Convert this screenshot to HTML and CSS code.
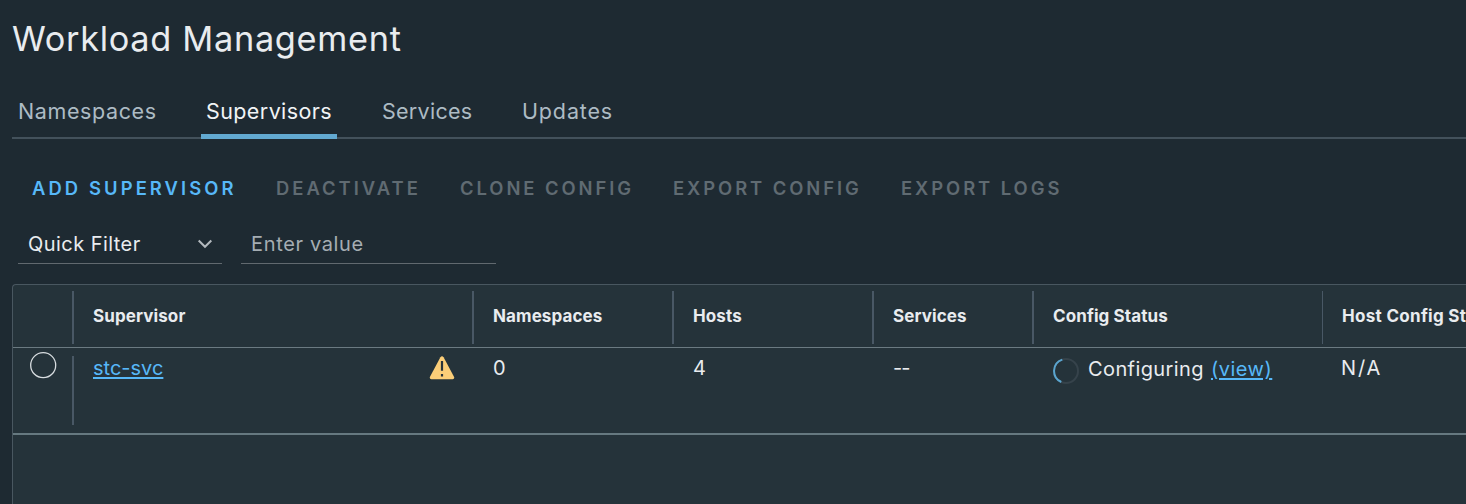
FILE: index.html
```html
<!DOCTYPE html>
<html lang="en">
<head>
<meta charset="utf-8">
<title>Workload Management</title>
<link rel="stylesheet" href="styles.css">
</head>
<body>
<main class="page">
  <h1 class="title">Workload Management</h1>
  <nav class="tabs">
    <a class="tab tab-namespaces">Namespaces</a>
    <a class="tab tab-supervisors active">Supervisors</a>
    <a class="tab tab-services">Services</a>
    <a class="tab tab-updates">Updates</a>
  </nav>
  <div class="actions">
    <button class="action add">ADD SUPERVISOR</button>
    <button class="action deactivate" disabled>DEACTIVATE</button>
    <button class="action clone" disabled>CLONE CONFIG</button>
    <button class="action export" disabled>EXPORT CONFIG</button>
    <button class="action logs" disabled>EXPORT LOGS</button>
  </div>
  <div class="filters">
    <div class="select"><span>Quick Filter</span>
      <svg class="chevron" width="16" height="10" viewBox="0 0 16 10"><path d="M1.7 1.5 8 7.8l6.3-6.3"/></svg>
    </div>
    <div class="field">Enter value</div>
  </div>
  <section class="grid">
    <div class="row head">
      <div class="cell pick"></div>
      <div class="cell">Supervisor</div>
      <div class="cell">Namespaces</div>
      <div class="cell">Hosts</div>
      <div class="cell">Services</div>
      <div class="cell">Config Status</div>
      <div class="cell last">Host Config St</div>
    </div>
    <div class="row body">
      <div class="cell pick"><svg width="28" height="28" viewBox="0 0 28 28"><circle class="radio" cx="14.2" cy="14.2" r="12.5"/></svg></div>
      <div class="cell name"><a class="link">stc-svc</a>
        <svg class="warn" width="26" height="24" viewBox="0 0 26 24"><path class="tri" d="M11.4 1.2Q13 -.6 14.6 1.2L25 20.8Q25.8 23 23.7 23.2H2.3Q.2 23 1 20.8Z"/><path class="mark" d="M13 5v9.8M13 18v2.4"/></svg>
      </div>
      <div class="cell">0</div>
      <div class="cell">4</div>
      <div class="cell dashes">--</div>
      <div class="cell status">
        <svg class="spinner" width="26" height="26" viewBox="0 0 26 26"><circle class="track" cx="13" cy="13" r="12"/><path class="arc" d="M9.3 1.6A12 12 0 0 0 8.3 24"/></svg>
        <span class="state">Configuring</span><a class="link view">(view)</a>
      </div>
      <div class="cell last">N/A</div>
    </div>
  </section>
</main>
</body>
</html>
```
FILE: styles.css
```css
* { box-sizing: border-box; }
body {
  margin: 0;
  height: 504px;
  overflow: hidden;
  background: #1e2a32;
  color: #e9ecef;
  font-family: Inter, "Liberation Sans", sans-serif;
  font-size: 20px;
}
.page { width: 1466px; height: 504px; padding-left: 12px; overflow: hidden; white-space: nowrap; }
.title { margin: 0; padding: 17px 0 0; height: 85px; font-size: 34.3px; font-weight: 400; line-height: 43px; letter-spacing: .7px; }
.tabs { display: flex; height: 54px; border-bottom: 2px solid #43515b; font-size: 21.5px; }
.tab { height: 54px; padding-left: 5px; line-height: 52px; color: #adbbc4; }
.tab-namespaces { width: 189px; padding-left: 6px; letter-spacing: .6px; }
.tab-supervisors { width: 136px; margin-right: 40px; letter-spacing: .4px; }
.tab-services { width: 140px; letter-spacing: .27px; }
.tab-updates { letter-spacing: .85px; }
.tab.active { color: #f1f4f6; border-bottom: 5px solid #62a9d1; }
.actions { display: flex; height: 85px; padding: 32px 0 0 20px; }
.action { display: block; height: 35px; padding: 0; border: 0; background: none; font: 600 18.4px/35px Inter, sans-serif; letter-spacing: 2.95px; color: #606b72; text-align: left; }
.add { width: 244px; color: #57b8f8; letter-spacing: 3.1px; }
.deactivate { width: 184px; letter-spacing: 3px; }
.clone { width: 213px; }
.export { width: 228px; }
.filters { display: flex; gap: 19px; height: 60px; padding-left: 6px; }
.select, .field { height: 40px; padding: 0 10px; border-bottom: 1px solid #61696f; line-height: 40px; }
.select { display: flex; width: 204px; align-items: center; justify-content: space-between; letter-spacing: .45px; }
.field { width: 255px; color: #a5adb3; letter-spacing: .65px; }
.chevron { margin-right: -1px; fill: none; stroke: #b3b9be; stroke-width: 2; }
.grid { height: 230px; border: 1px solid #495760; border-right: 0; border-bottom: 0; border-radius: 4px 0 0 0; background: #25333a; }
.row { display: grid; grid-template-columns: 61px 400px 200px 200px 160px 289px 1fr; }
.head { height: 63px; padding: 6px 0 3px; border-bottom: 1px solid #6b7a81; font-size: 17px; font-weight: 700; line-height: 50px; letter-spacing: .1px; }
.head .cell { border-right: 2px solid #495865; padding-left: 19px; }
.head .cell:nth-child(6) { border-right-width: 1px; }
.head .last { border: 0; letter-spacing: .3px; }
.body { height: 87px; border-bottom: 2px solid #667980; line-height: 40px; }
.body .cell { padding-left: 19px; }
.body .pick { height: 69px; margin-top: 8px; padding: 0 0 0 16px; border-right: 2px solid #495865; }
.pick svg { display: block; margin-top: -5px; }
.radio { fill: none; stroke: #d8dde0; stroke-width: 1.3; }
.name { display: flex; justify-content: space-between; padding-right: 19px; }
.link { color: #57b8f8; text-decoration: underline; text-decoration-thickness: 2px; text-underline-offset: 2px; }
.warn { margin-top: 8px; }
.tri { fill: #fbce78; }
.mark { stroke: #29343a; stroke-width: 2.2; fill: none; }
.dashes { letter-spacing: -1px; }
.status { display: flex; line-height: 43px; }
.spinner { margin: 10px 9px 0 0; fill: none; }
.state { letter-spacing: .4px; }
.track { stroke: #36434b; stroke-width: 2; }
.arc { stroke: #5aa5cf; stroke-width: 2; }
.view { margin-left: 7px; letter-spacing: .5px; }
.body .last { padding-left: 18px; letter-spacing: 1.9px; }
```
